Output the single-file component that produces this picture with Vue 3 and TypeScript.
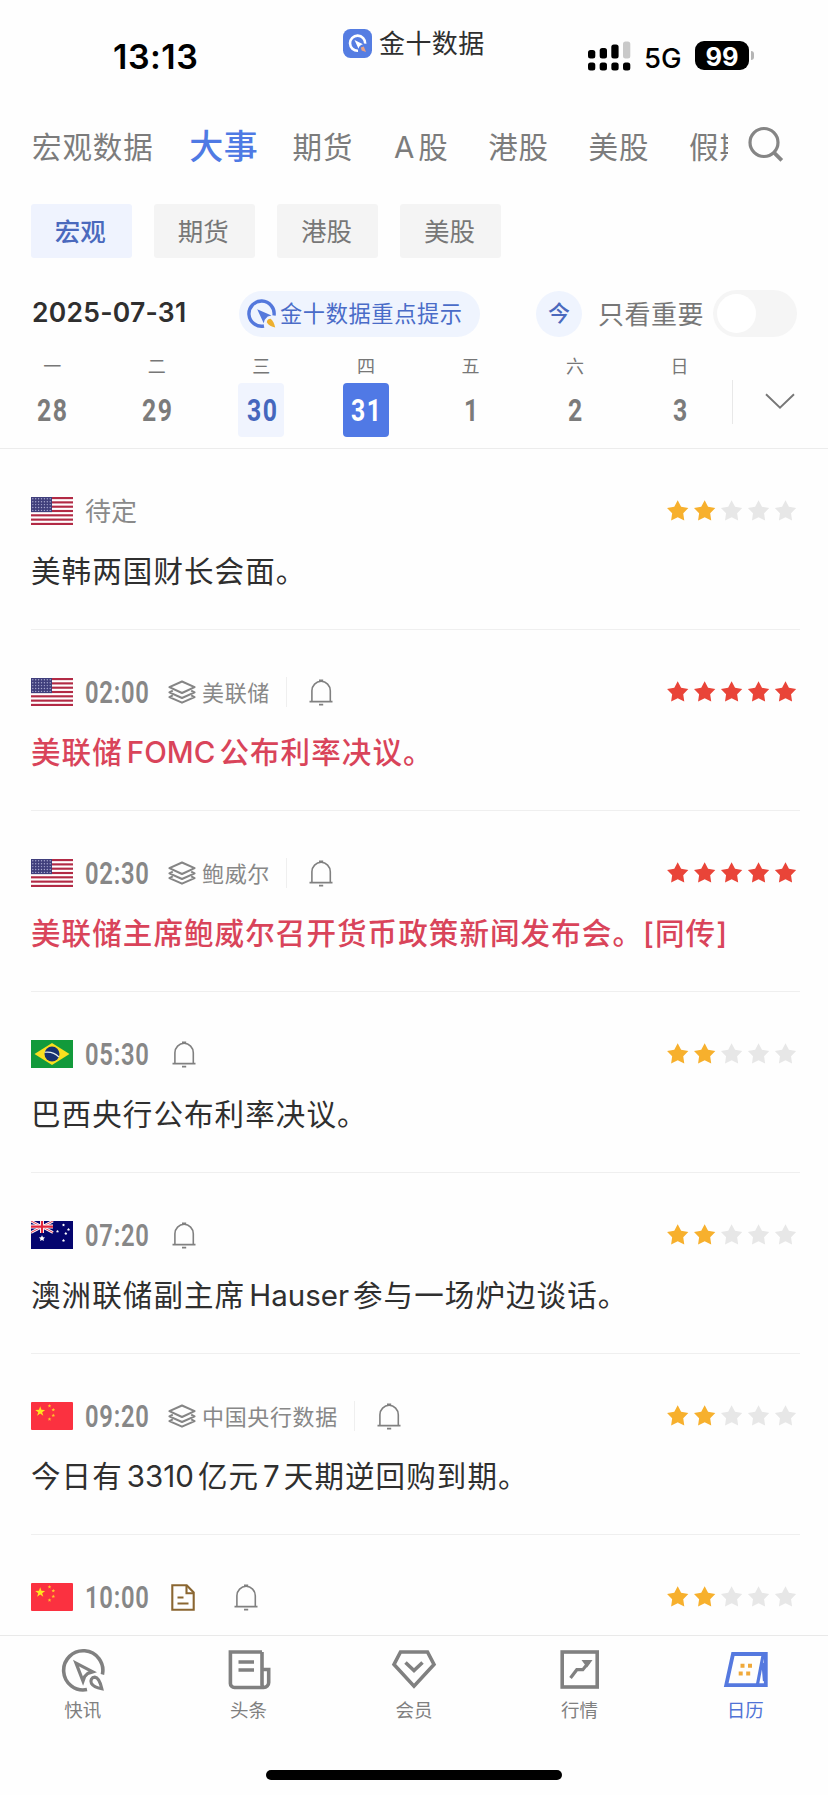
<script setup lang="ts">
import { ref } from 'vue'

type Country = 'us' | 'br' | 'au' | 'cn'
interface EventItem {
  id: number
  country: Country
  time?: string
  tag?: string
  doc?: boolean
  bell?: boolean
  stars: number
  title: string
}

const tabs = ['宏观数据', '大事', '期货', 'A股', '港股', '美股', '假期']
const activeTab = ref('大事')
const chips = ['宏观', '期货', '港股', '美股']
const activeChip = ref('宏观')
const days = [
  { w: '一', d: '28' },
  { w: '二', d: '29' },
  { w: '三', d: '30', state: 'today' },
  { w: '四', d: '31', state: 'selected' },
  { w: '五', d: '1' },
  { w: '六', d: '2' },
  { w: '日', d: '3' },
]
const events: EventItem[] = [
  { id: 1, country: 'us', stars: 2, title: '美韩两国财长会面。' },
  { id: 2, country: 'us', time: '02:00', tag: '美联储', bell: true, stars: 5, title: '美联储FOMC公布利率决议。' },
  { id: 3, country: 'us', time: '02:30', tag: '鲍威尔', bell: true, stars: 5, title: '美联储主席鲍威尔召开货币政策新闻发布会。[同传]' },
  { id: 4, country: 'br', time: '05:30', bell: true, stars: 2, title: '巴西央行公布利率决议。' },
  { id: 5, country: 'au', time: '07:20', bell: true, stars: 2, title: '澳洲联储副主席Hauser参与一场炉边谈话。' },
  { id: 6, country: 'cn', time: '09:20', tag: '中国央行数据', bell: true, stars: 2, title: '今日有3310亿元7天期逆回购到期。' },
  { id: 7, country: 'cn', time: '10:00', doc: true, bell: true, stars: 2, title: '' },
]
const navs = ['快讯', '头条', '会员', '行情', '日历']

// Separates Latin runs from Chinese text so they can carry side spacing.
const split = (s: string) => s.split(/([A-Za-z0-9]+)/).filter(Boolean)
const isLatin = (s: string) => /^[A-Za-z0-9]+$/.test(s)

const star = (cx: number, cy: number, r: number, inner = 0.5) =>
  Array.from({ length: 10 }, (_, i) => {
    const a = (Math.PI / 5) * i - Math.PI / 2
    const q = i % 2 ? r * inner : r
    return `${(cx + q * Math.cos(a)).toFixed(2)},${(cy + q * Math.sin(a)).toFixed(2)}`
  }).join(' ')
const canton = Array.from({ length: 35 }, (_, i) => ({
  x: 1.8 + (i % 7) * 2.9,
  y: 1.8 + Math.floor(i / 7) * 2.9,
}))
</script>

<template>
  <div class="screen">
    <div class="status">
      <div class="clock">13:13</div>
      <div class="brand">
        <svg width="29" height="29" viewBox="0 0 29 29">
          <rect width="29" height="29" rx="7.5" fill="#557de2" />
          <path d="M15 21.8a7.6 7.6 0 1 1 7.2-7.2" fill="none" stroke="#fff" stroke-width="2.6" />
          <path d="M11.5 11l8.5 4.2-2 .8-1.8 1.8-.7 2z" fill="#fff" />
          <path d="M17.8 18.6l3-1.2 2.2 5.6-4.3-1.4z" fill="#e9a183" />
        </svg>
        <span>金十数据</span>
      </div>
      <div class="indicators">
        <svg class="signal" width="43" height="30" viewBox="0 0 43 30">
          <rect x="0" y="9" width="7.3" height="8.5" rx="2.5" />
          <rect x="11.7" y="7" width="7.3" height="10.5" rx="2.5" />
          <rect x="23.3" y="3.5" width="7.3" height="14" rx="2.5" />
          <rect x="35" y="0.5" width="7.3" height="17" rx="2.5" fill="#c9c9c9" />
          <rect v-for="i in 4" :key="i" :x="(i - 1) * 11.67" y="21.5" width="7.3" height="8" rx="2.5" />
        </svg>
        <span class="net">5G</span>
        <span class="battery">99</span>
        <span class="nub"></span>
      </div>
    </div>

    <div class="tabs">
      <div class="tab-scroll">
        <span v-for="t in tabs" :key="t" class="tab" :class="{ active: t === activeTab }" @click="activeTab = t">
          <template v-if="t === 'A股'"><i class="letter">A</i>股</template>
          <template v-else>{{ t }}</template>
        </span>
      </div>
      <svg class="search" width="38" height="38" viewBox="0 0 38 38" fill="none" stroke="#858585" stroke-width="3.2">
        <circle cx="18" cy="17.500" r="14" />
        <path d="M27.800 27.300l8 8" stroke-width="3.800" />
      </svg>
    </div>

    <div class="chips">
      <button v-for="c in chips" :key="c" class="chip" :class="{ active: c === activeChip }" @click="activeChip = c">{{ c }}</button>
    </div>

    <div class="tools">
      <span class="date">2025-07-31</span>
      <div class="tip">
        <svg width="30" height="30" viewBox="0 0 30 30">
          <path d="M17 27A12.600 12.600 0 1 1 27 16.500" fill="none" stroke="#5478dc" stroke-width="3.400" />
          <path d="M10.200 10.200l14.300 6.300-3.800 1-3 3.200-1 3.600z" fill="#5478dc" />
          <path d="M19.800 23.200c.2-2.200 1.500-3.600 3.800-3.500 2.200 1.600 3.800 5 4.600 8.900-3.600-.9-6.900-2.500-8.400-5.400z" fill="#edb02e" />
        </svg>
        <span>金十数据重点提示</span>
      </div>
      <span class="now">今</span>
      <span class="only">只看重要</span>
      <span class="toggle"><i></i></span>
    </div>

    <div class="week">
      <div v-for="d in days" :key="d.d" class="day">
        <span class="wd">{{ d.w }}</span>
        <span class="num" :class="d.state"><b class="din">{{ d.d }}</b></span>
      </div>
      <div class="expand">
        <svg width="30" height="17" viewBox="0 0 30 17" fill="none" stroke="#777" stroke-width="1.900">
          <path d="M1 1.200l14 13.600L29 1.200" />
        </svg>
      </div>
    </div>

    <div class="list">
      <div v-for="e in events" :key="e.id" class="item">
        <div class="meta">
          <svg class="flag" width="42" height="28" viewBox="0 0 42 28">
            <template v-if="e.country === 'us'">
              <rect width="42" height="28" fill="#fff" />
              <rect v-for="i in 7" :key="i" x="0" :y="(i - 1) * 4.310" width="42" height="2.150" fill="#b22a45" />
              <rect width="21" height="15.100" fill="#403f7c" />
              <circle v-for="(p, i) in canton" :key="'s' + i" :cx="p.x" :cy="p.y" r="0.700" fill="#a9a9d0" />
            </template>
            <template v-else-if="e.country === 'br'">
              <rect width="42" height="28" fill="#129a3b" />
              <path d="M21 3l17.500 11L21 25 3.500 14z" fill="#f9df1f" />
              <circle cx="21" cy="14" r="7.500" fill="#17306f" />
              <path d="M13.700 12.300c5.300-.8 10.600 1 14.200 4.700" fill="none" stroke="#e5edf0" stroke-width="1.100" />
            </template>
            <template v-else-if="e.country === 'au'">
              <rect width="42" height="28" fill="#05056e" />
              <path d="M0 0l22 11.500M22 0L0 11.500" stroke="#fff" stroke-width="2.600" />
              <path d="M0 0l22 11.500M22 0L0 11.500" stroke="#e0263d" stroke-width=".9" />
              <path d="M11 0v12M0 5.600h22" stroke="#fff" stroke-width="4" />
              <path d="M11 0v12M0 5.600h22" stroke="#e0263d" stroke-width="2.200" />
              <polygon :points="star(11, 17.500, 3.200)" fill="#fff" />
              <polygon v-for="(p, i) in [[32.500, 4], [26.500, 10.400], [37.500, 8.600], [34.800, 12.600], [32.500, 19.600]]" :key="'a' + i" :points="star(p[0], p[1], 1.500, 0.6)" fill="#fff" />
            </template>
            <template v-else>
              <rect width="42" height="28" rx="1" fill="#fb3140" />
              <polygon :points="star(9.200, 9.500, 5.200, 0.4)" fill="#ffe51f" />
              <polygon v-for="(p, i) in [[18.500, 4], [22.300, 7.800], [22.300, 13.500], [18.500, 17.200]]" :key="'c' + i" :points="star(p[0], p[1], 1.900, 0.45)" fill="#ffc52a" />
            </template>
          </svg>
          <span v-if="e.time" class="time din">{{ e.time }}</span>
          <span v-else class="pending">待定</span>
          <div v-if="e.tag" class="tag">
            <svg width="28" height="24" viewBox="0 0 28 24" fill="none" stroke="#858585" stroke-width="2" stroke-linejoin="round">
              <path d="M14 1.500l12.600 5.700L14 13 1.400 7.200z" />
              <path d="M4.800 10.600l-3.400 1.700L14 18l12.600-5.700-3.400-1.700" />
              <path d="M4.800 15.400l-3.400 1.700L14 22.700l12.600-5.600-3.400-1.700" />
            </svg>
            <span>{{ e.tag }}</span>
          </div>
          <svg v-if="e.doc" class="doc" width="24" height="27" viewBox="0 0 24 27" fill="none" stroke="#8a6631" stroke-width="2.100">
            <path d="M1.300 1.300h14.400l7 7.200v17.200H1.300z" />
            <path d="M15.500 1.300v8h7M6.500 13.500h6M6.500 19.500h11" />
          </svg>
          <svg v-if="e.bell" class="bell" :class="{ plain: !e.tag && !e.doc, far: e.doc }" width="24" height="27" viewBox="0 0 24 27" fill="none" stroke="#808080" stroke-width="1.600">
            <path d="M.5 22.600h23M2.900 22.600V11.800a9.200 9.500 0 0 1 18.400 0v10.800" />
            <path d="M10 1.400h4.200M10 25.600h4.200" stroke-width="1.900" />
          </svg>
          <svg class="stars" width="130" height="22" viewBox="0 0 130 22">
            <polygon v-for="i in 5" :key="i" :points="star(10.700 + (i - 1) * 26.950, 11.500, 11.200, 0.520)" :fill="i > e.stars ? '#e7e7e7' : e.stars === 5 ? '#e94438' : '#f7b02d'" />
          </svg>
        </div>
        <div v-if="e.title" class="title" :class="{ hot: e.stars === 5 }"><span v-for="(s, i) in split(e.title)" :key="i" :class="{ latin: isLatin(s) }">{{ s }}</span></div>
      </div>
    </div>

    <div class="bottom">
      <div v-for="(n, i) in navs" :key="n" class="nav" :class="{ active: i === 4 }">
        <svg width="46" height="44" viewBox="0 0 46 44" fill="none" stroke="#808080" stroke-width="3.600">
          <template v-if="i === 0">
            <path d="M27 41.600A19.600 19.600 0 1 1 42.400 26.500" />
            <path d="M16 15.200l16.800 8.600-5 1.600-3.200 3.200-1.600 4.600z" stroke-width="3.200" />
            <path d="M31.500 35.500c-1.600-3 .2-6.200 3.300-6.300 3.200.3 5.400 4.600 7 11.600-4.400-.8-8.400-2-10.300-5.300z" stroke-width="3.200" />
          </template>
          <template v-else-if="i === 1">
            <path d="M37 4H5.400v31.500a4 4 0 0 0 4 4h29.300a5 5 0 0 0 5-5V21.500h-7M37 4v32.500q0 3 2.500 3" />
            <path d="M13.500 14h15.500M13.500 22h15.500" />
          </template>
          <template v-else-if="i === 2">
            <path d="M9.500 4h27l6.500 12.500L23 38.200 3 16.500z" />
            <path d="M14.500 14.500l8.500 8 8.500-8" />
          </template>
          <template v-else-if="i === 3">
            <rect x="5.200" y="4" width="35" height="35" />
            <path d="M13.500 30l6.300-8.300h6l6.200-7.700" stroke-width="3.200" />
            <path d="M24.500 12h11l-5.500 7.500z" fill="#808080" stroke="none" />
          </template>
          <template v-else>
            <path d="M11 6h32.800v31.200H4.200z" stroke="#5579df" stroke-width="3.800" />
            <path d="M41.300 6l-6 31.200M41 15l1.500 18" stroke="#5579df" stroke-width="3.200" />
            <path d="M18.500 17.800h4M26 17.800h4M16.700 25.500h4M24.200 25.500h4" stroke="#f0a93a" stroke-width="4" />
          </template>
        </svg>
        <span>{{ n }}</span>
      </div>
    </div>
    <div class="home"><i></i></div>
  </div>
</template>

<style>
html,
body {
  margin: 0;
  background: #fefefe;
}
</style>

<style scoped>
* {
  box-sizing: border-box;
}
.screen {
  width: 828px;
  height: 1795px;
  overflow: hidden;
  display: flex;
  flex-direction: column;
  background: #fefefe;
  color: #2f2f2f;
  font-family: Inter, 'Noto Sans CJK SC', sans-serif;
}
svg {
  display: block;
  flex: none;
}
span {
  white-space: nowrap;
}
.din {
  display: inline-block;
  font-family: Roboto, sans-serif;
  transform-origin: 0 50%;
}
.status {
  height: 112px;
  flex: none;
  display: grid;
  grid-template-columns: 343px 244px 1fr;
}
.clock {
  padding: 36px 0 0 113px;
  font-size: 34px;
  line-height: 42px;
  letter-spacing: 0.5px;
  font-weight: 600;
  color: #000;
}
.brand {
  display: flex;
  gap: 7px;
  padding-top: 29px;
}
.brand span {
  font-size: 26px;
  line-height: 30px;
  letter-spacing: 0.4px;
}
.indicators {
  display: flex;
  padding-top: 41px;
  height: 71px;
}
.signal {
  margin-left: 1px;
}
.net {
  width: 51px;
  margin-left: 13px;
  font-size: 27.500px;
  line-height: 34px;
  font-weight: 500;
  color: #000;
}
.battery {
  width: 54px;
  height: 29px;
  border-radius: 9px;
  background: #000;
  color: #fff;
  font-size: 25.500px;
  line-height: 31px;
  font-weight: 700;
  text-align: center;
}
.nub {
  width: 3px;
  height: 9px;
  margin: 10px 0 0 2px;
  border-radius: 0 4px 4px 0;
  background: #b5b5b5;
}
.tabs {
  height: 70px;
  flex: none;
  display: flex;
  padding-left: 32px;
}
.tab-scroll {
  width: 696px;
  display: flex;
  align-items: center;
  gap: 39.600px;
  overflow: hidden;
}
.tab {
  flex: none;
  font-size: 29.500px;
  line-height: 44px;
  letter-spacing: 0.900px;
  color: #7c7c7c;
}
.tab.active {
  margin: 0 -5.500px 0 -4px;
  font-size: 34px;
  letter-spacing: 0.600px;
  font-weight: 500;
  color: #4f7ae4;
}
.letter {
  font-style: normal;
  margin: 0 3px 0 1px;
}
.search {
  margin: 13px 0 0 18px;
}
.chips {
  display: flex;
  gap: 22.600px;
  height: 76px;
  flex: none;
  padding: 22px 0 0 31px;
}
.chip {
  width: 100.500px;
  height: 54px;
  border: 0;
  border-radius: 3px;
  padding: 0 2px 0 0;
  background: #f4f4f4;
  color: #777;
  font: 400 25.500px/52px 'Noto Sans CJK SC', sans-serif;
  display: flex;
  justify-content: center;
  align-items: flex-start;
}
.chip.active {
  background: #eff3fe;
  color: #4a69bd;
  font-weight: 500;
}
.tools {
  display: flex;
  align-items: center;
  height: 47px;
  margin-top: 32px;
  flex: none;
  padding-left: 32px;
}
.date {
  width: 207px;
  font-size: 26.500px;
  line-height: 45px;
  height: 47px;
  letter-spacing: 0.250px;
  font-weight: 600;
}
.tip {
  width: 241px;
  height: 46px;
  border-radius: 23px;
  background: #eff4fe;
  display: flex;
  align-items: center;
  gap: 3px;
  padding-left: 8px;
  color: #4a6cc8;
  font-size: 22.200px;
  letter-spacing: 0.650px;
}
.tip span {
  padding-bottom: 3px;
}
.now {
  width: 46px;
  height: 46px;
  margin-left: 56px;
  border-radius: 50%;
  background: #eff4fe;
  color: #4a69bd;
  font-size: 22px;
  line-height: 44px;
  font-weight: 500;
  text-align: center;
}
.only {
  width: 115px;
  margin-left: 16px;
  padding-bottom: 3px;
  font-size: 26px;
  letter-spacing: 0.500px;
  color: #777;
}
.toggle {
  width: 84px;
  height: 47px;
  border-radius: 24px;
  background: #f5f5f5;
  padding: 4px;
}
.toggle i {
  display: block;
  width: 39px;
  height: 39px;
  border-radius: 50%;
  background: #fff;
}
.week {
  display: flex;
  height: 112px;
  flex: none;
  border-bottom: 1px solid #ececec;
}
.day {
  width: 104.550px;
  display: flex;
  flex-direction: column;
  align-items: center;
}
.wd {
  font-size: 18px;
  line-height: 26px;
  margin-top: 17px;
  color: #777;
}
.num {
  width: 46px;
  height: 54px;
  margin-top: 3px;
  border-radius: 4px;
  display: flex;
  align-items: center;
  justify-content: center;
  color: #7b7b7b;
}
.num b {
  font-size: 31px;
  font-weight: 700;
  letter-spacing: 2px;
  margin-right: -2px;
  transform: scaleX(0.8);
  transform-origin: 50% 50%;
}
.num.today {
  background: #f0f4fe;
  color: #4567bd;
}
.num.selected {
  background: #5079e5;
  color: #fff;
}
.expand {
  width: 64px;
  height: 44px;
  margin-top: 43px;
  border-left: 1px solid #e8e8e8;
  padding: 13px 0 0 32px;
}
.list {
  flex: none;
  height: 1186px;
  overflow: hidden;
  padding: 0 28px 0 31px;
}
.item {
  height: 181px;
  display: flow-root;
  border-bottom: 1px solid #efefef;
}
.meta {
  height: 28px;
  margin-top: 48px;
  display: flex;
  align-items: center;
}
.pending {
  margin-left: 12px;
  padding-top: 1px;
  font-size: 26px;
  line-height: 28px;
  color: #8a8a8a;
}
.time {
  width: 83px;
  margin-left: 12px;
  font-size: 30.500px;
  line-height: 29px;
  font-weight: 600;
  letter-spacing: 1px;
  color: #878787;
  transform: scaleX(0.78);
}
.tag {
  display: flex;
  align-items: center;
  gap: 6px;
  height: 30px;
  padding-right: 16px;
  border-right: 1px solid #efefef;
  color: #888;
  font-size: 22px;
  letter-spacing: 0.650px;
}
.tag span {
  padding-bottom: 2px;
}
.doc {
  margin-left: 3px;
}
.bell {
  margin-left: 22px;
}
.bell.plain {
  margin-left: 4px;
}
.bell.far {
  margin-left: 39px;
}
.stars {
  margin: 0 3.500px 0 auto;
}
.title {
  margin-top: 24px;
  font-size: 29.500px;
  line-height: 44px;
  letter-spacing: 1.100px;
  white-space: nowrap;
}
.title.hot {
  color: #d9445a;
  font-weight: 500;
}
.latin {
  margin: 0 4px;
  letter-spacing: 0;
}
.bottom {
  height: 106px;
  flex: none;
  border-top: 1px solid #e9e9e9;
  display: flex;
}
.nav {
  flex: 1;
  display: flex;
  flex-direction: column;
  align-items: center;
  padding-top: 12px;
  color: #808080;
  font-size: 18.500px;
  line-height: 28px;
}
.nav span {
  margin-top: 4px;
}
.nav.active {
  color: #5073d6;
}
.home {
  padding: 29px 0 0 266px;
}
.home i {
  display: block;
  width: 296px;
  height: 9.500px;
  border-radius: 5px;
  background: #000;
}
</style>
